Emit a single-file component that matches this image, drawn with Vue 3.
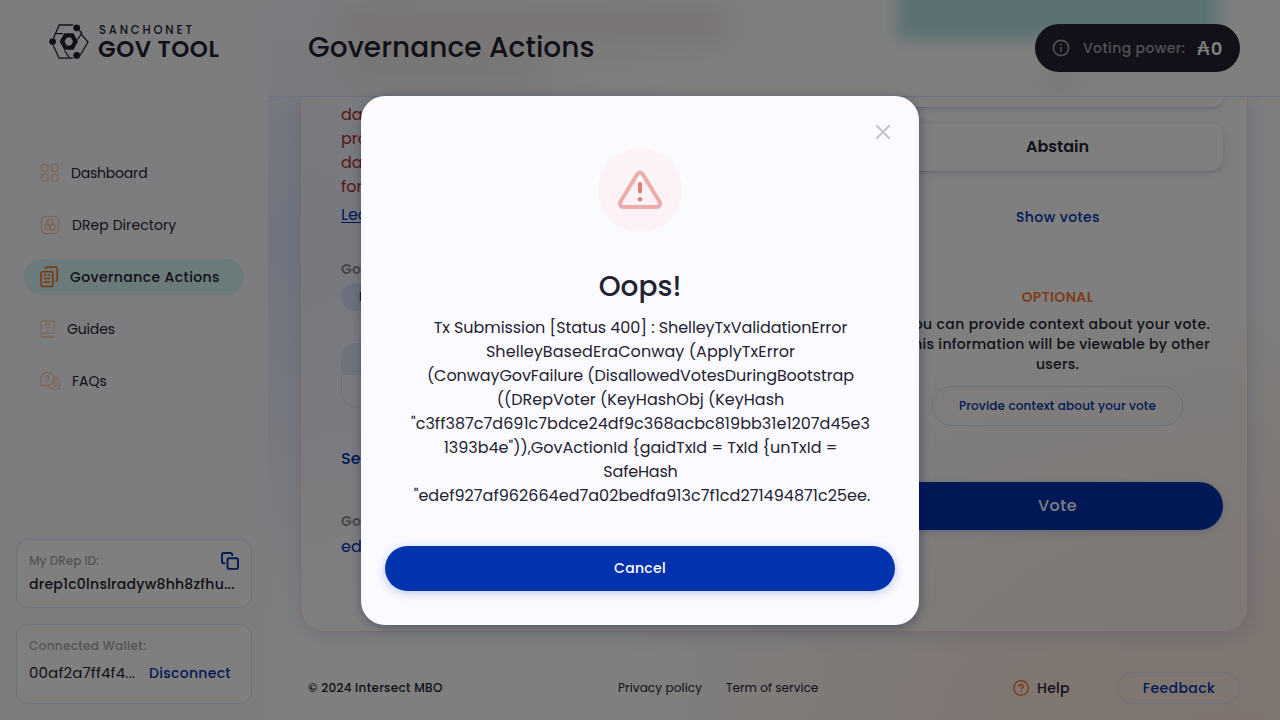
<script setup>
const errorLines = [
  { text: 'Tx Submission [Status 400] : ShelleyTxValidationError', tracking: -0.075 },
  { text: 'ShelleyBasedEraConway (ApplyTxError', tracking: 0.08 },
  { text: '(ConwayGovFailure (DisallowedVotesDuringBootstrap', tracking: -0.08 },
  { text: '((DRepVoter (KeyHashObj (KeyHash', tracking: 0 },
  { text: '"c3ff387c7d691c7bdce24df9c368acbc819bb31e1207d45e3', tracking: 0.03 },
  { text: '1393b4e")),GovActionId {gaidTxId = TxId {unTxId =', tracking: 0 },
  { text: 'SafeHash', tracking: -0.2 },
  { text: '"edef927af962664ed7a02bedfa913c7f1cd271494871c25ee.', tracking: 0.03 },
]
</script>

<template>
  <div class="app">
    <aside class="sidebar">
      <div class="logo">
        <svg width="40" height="36" viewBox="0 0 40 36" fill="none" stroke="#242232" stroke-width="1.3">
          <path d="M4.6 14 10.2 1H24M30.3 6.5 33.4 9.5M31.6 9.3 39 18 31 31.5M4.2 21.5 10.2 34.2H24M6.5 9.6H14M33.2 8.5 28.6 15.5M15.5 26.5 20.6 34" />
          <path d="M10.6 17.5 15.2 9.2h9.2l4.6 8.3-4.6 8.3h-9.2zM15.6 17.5l2.1 3.9h4.2l2.1-3.9-2.1-3.9h-4.2z" fill="#242232" fill-rule="evenodd" stroke="none" />
          <g fill="#242232" stroke="none"><circle cx="27.7" cy="3.8" r="3.4" /><circle cx="3.6" cy="17.6" r="3.4" /><circle cx="27.7" cy="31.4" r="3.4" /></g>
        </svg>
        <div class="logo-words"><span class="sancho">SANCHONET</span><span class="gov">GOV TOOL</span></div>
      </div>
      <nav>
        <a class="item i1">
          <svg width="20" height="20" viewBox="0 0 20 20"><g fill="none" stroke="#ffcbad" stroke-width="1.3"><rect x="1.3" y="1.3" width="6.8" height="7" rx="2.8"/><rect x="11.4" y="1.3" width="7" height="7" rx="2.2"/><rect x="1.3" y="11.3" width="6.8" height="7" rx="2.2"/><rect x="11.4" y="11.3" width="7" height="7" rx="3.3"/></g></svg>
          <span>Dashboard</span>
        </a>
        <a class="item i2">
          <svg width="20" height="20" viewBox="0 0 20 20"><g fill="none" stroke="#ffcbad" stroke-width="1.4"><rect x="1.4" y="1.4" width="17.2" height="17.2" rx="4.5"/><circle cx="10" cy="7.3" r="3"/><circle cx="7.6" cy="12" r="3"/><circle cx="12.4" cy="12" r="3"/></g></svg>
          <span>DRep Directory</span>
        </a>
        <a class="item i3 active">
          <svg width="19" height="22" viewBox="0 0 19 22"><g fill="none" stroke="#ff640a" stroke-width="1.5"><rect x="1" y="5.8" width="11.8" height="14.8" rx="1.8"/><path d="M5.8 3V2.6Q5.8 1.1 7.3 1.1h8.3q1.7 0 1.7 1.7v10.5q0 1.8-1.9 1.8M3.8 9h2.3m1.4 0H10M3.8 12.6H10M3.8 16H10"/></g></svg>
          <span>Governance Actions</span>
        </a>
        <a class="item i4">
          <svg width="16" height="20" viewBox="0 0 16 20"><g fill="none" stroke="#ffcbad" stroke-width="1.3"><path d="M14.2 14.4V3Q14.2 2 13.2 2H2.8Q1 2 1 3.8v12.4Q1 18 2.8 18h11.4M1 15.8q.4-1.4 1.8-1.4h11.4"/><path d="M5.6 6.8q0-1.8 2-1.8t2 1.8q0 1-1 1.7T7.6 10M7.6 11.4v1.2"/></g></svg>
          <span>Guides</span>
        </a>
        <a class="item i5">
          <svg width="21" height="20" viewBox="0 0 21 20"><g fill="none" stroke="#ffcbad" stroke-width="1.3"><path d="M.9 14.5V8.2a6.5 6.5 0 1 1 6.5 6.3zM14 5.8a6.2 6.2 0 0 1 5.4 6v6h-5.8q-4.2 0-5.6-3.3M14.5 9h2M14.5 11.8h2.5M13 14.5h4"/><path d="M5.4 6.5q0-1.7 1.8-1.7T9 6.5q0 1-.9 1.4t-.9 1.3M7.2 10.3v1.2"/></g></svg>
          <span>FAQs</span>
        </a>
      </nav>
      <div class="side-card drep">
        <div class="row"><span class="label l1">My DRep ID:</span>
          <svg width="18" height="18" viewBox="0 0 18 18"><g fill="none" stroke="#0033ad" stroke-width="1.9"><rect x="6.5" y="6.3" width="10.5" height="10.6" rx="1.6"/><path d="M4 11.2H2.7Q1 11.2 1 9.5V2.7Q1 1 2.7 1h6.8q1.7 0 1.7 1.7V4"/></g></svg>
        </div>
        <span class="drep-id">drep1c0lnslradyw8hh8zfhu...</span>
      </div>
      <div class="side-card wallet">
        <span class="label l2">Connected Wallet:</span>
        <div class="row"><span class="addr">00af2a7ff4f4...</span><a class="disconnect">Disconnect</a></div>
      </div>
    </aside>

    <main class="main">
      <header class="header">
        <div class="behind"><i class="b1"></i><i class="b2"></i><i class="b3"></i><i class="b4"></i></div>
        <h1>Governance Actions</h1>
        <div class="power">
          <svg width="18" height="18" viewBox="0 0 18 18"><g fill="none" stroke="#a3a2aa" stroke-width="1.6"><circle cx="9" cy="9" r="7.6"/><path d="M9 8v5M9 4.9v1.7"/></g></svg>
          <span class="power-label">Voting power:</span>
          <span class="power-value"><b>₳</b>0</span>
        </div>
      </header>

      <section class="content">
        <div class="card">
          <div class="details">
            <p class="warning">data<br>provided<br>data<br>format</p>
            <a class="learn">Learn more</a>
            <span class="field f1">Governance</span>
            <span class="pill">Info Action</span>
            <div class="table"><div></div></div>
            <a class="see">See external</a>
            <span class="field f2">Governance</span>
            <span class="hash">edef927a</span>
          </div>
          <div class="voting">
            <div class="choice cut"></div>
            <div class="choice abstain">Abstain</div>
            <a class="show">Show votes</a>
            <span class="optional">OPTIONAL</span>
            <p class="context"><span class="c1">You can provide context about your vote.</span><br><span class="c2">This information will be viewable by other</span><br><span class="c3">users.</span></p>
            <button class="provide">Provide context about your vote</button>
            <button class="vote">Vote</button>
          </div>
        </div>
      </section>

      <footer class="footer">
        <span class="copy">© 2024 Intersect MBO</span>
        <div class="links"><span class="privacy">Privacy policy</span><span class="terms">Term of service</span></div>
        <div class="actions">
          <svg width="16" height="16" viewBox="0 0 16 16"><g fill="none" stroke="#ff640a" stroke-width="1.3"><circle cx="8" cy="8" r="7.3"/><path d="M5.8 6.5q0-2 2.2-2t2.2 1.9q0 1.1-1.1 1.6T8 9.4M8 10.7v1.4"/></g></svg>
          <span class="help">Help</span>
          <button class="feedback">Feedback</button>
        </div>
      </footer>
    </main>

    <div class="overlay">
      <div class="modal">
        <svg class="close" width="14" height="14" viewBox="0 0 14 14"><path d="M1 1l12 12M13 1L1 13" stroke="#c4c4c7" stroke-width="2" stroke-linecap="round"/></svg>
        <svg class="alert" width="84" height="84" viewBox="0 0 84 84">
          <circle cx="42" cy="42" r="42" fill="#fdf2f5"/>
          <path d="M39.1 26.5 22.7 53.2Q20.8 58.9 25.2 59H58.8Q63.2 58.9 61.3 53.2L44.9 26.5Q42 22.7 39.1 26.5z" fill="none" stroke="#eeabab" stroke-width="4" stroke-linejoin="round"/>
          <path d="M42 36v7.5" stroke="#e57b7b" stroke-width="4" stroke-linecap="round"/><circle cx="42" cy="51.2" r="2.2" fill="#e57b7b"/>
        </svg>
        <h2>Oops!</h2>
        <div class="message">
          <div v-for="line in errorLines" :key="line.text"><span :style="{ letterSpacing: line.tracking + 'px' }">{{ line.text }}</span></div>
        </div>
        <button class="cancel">Cancel</button>
      </div>
    </div>
  </div>
</template>

<style>
body { margin: 0; overflow: hidden; }
</style>

<style scoped>
* { box-sizing: border-box; }
.app { position: relative; width: 1280px; height: 720px; display: flex; overflow: hidden; background: #fff; font-family: Poppins, Inter, "Open Sans", sans-serif; color: #242232; white-space: nowrap; }
button { font-family: inherit; padding: 0; border: 0; background: none; }
svg { display: block; flex: none; overflow: visible; }
p, h1, h2 { margin: 0; }

.sidebar { width: 268px; height: 720px; flex: none; display: flex; flex-direction: column; background: #fbfbff; }
.logo { display: flex; gap: 9px; padding: 24px 0 0 49px; height: 155px; }
.logo-words { display: flex; flex-direction: column; }
.sancho { font-size: 11.5px; line-height: 13px; font-weight: 500; letter-spacing: 2.85px; padding-left: 1px; }
.gov { font-size: 23px; line-height: 25px; font-weight: 600; letter-spacing: .5px; }
nav { display: flex; flex-direction: column; gap: 16px; padding-left: 24px; }
.item { width: 220px; height: 36px; border-radius: 18px; display: flex; align-items: center; padding-left: 16px; font-size: 14px; }
.item svg { margin-right: 11px; }
.i1 { letter-spacing: -.2px; }
.i2 { letter-spacing: .07px; }
.i2 svg { margin-right: 12px; }
.i3 { letter-spacing: .4px; }
.i4 { letter-spacing: -.15px; }
.active { background: #d6f5f4; font-weight: 500; }
.side-card { width: 236px; margin-left: 16px; border: 1px solid #d6e2ff; border-radius: 12px; background: #fff; padding: 0 12px; }
.row { display: flex; align-items: center; }
.drep { height: 69px; margin-top: auto; margin-bottom: 16px; padding-top: 11px; }
.drep .row { height: 20px; justify-content: space-between; }
.drep-id { display: block; font-size: 14px; font-weight: 500; line-height: 26px; letter-spacing: .26px; }
.wallet { height: 80px; margin-bottom: 16px; padding-top: 11px; }
.label { display: block; font-size: 12px; font-weight: 500; line-height: 20px; color: #a9a9a9; }
.l2 { letter-spacing: .35px; }
.wallet .row { margin-top: 3px; height: 26px; }
.addr { font-size: 15px; width: 120px; letter-spacing: .14px; }
.disconnect { font-size: 14px; font-weight: 500; color: #0033ad; padding-top: 2px; letter-spacing: .3px; }

.main { flex: 1; display: flex; flex-direction: column; background:
  radial-gradient(ellipse 480px 400px at 10px 240px, #e4eaff 0%, rgba(228,234,255,.6) 45%, rgba(228,234,255,0) 100%),
  radial-gradient(ellipse 620px 480px at 960px 760px, #ffe8e0 0%, rgba(255,236,226,.85) 45%, rgba(255,240,230,0) 100%), #fff; }
.header { position: relative; height: 97px; flex: none; border-bottom: 1px solid #d6e2ff; display: flex; align-items: center; justify-content: space-between; padding: 0 40px; background: rgba(255,255,255,.35); overflow: hidden; }
.behind { position: absolute; inset: 0; }
.behind i { position: absolute; filter: blur(14px); }
.b1 { left: 72px; top: 4px; width: 390px; height: 42px; background: #f3eaea; }
.b2 { left: 72px; top: 36px; width: 200px; height: 50px; background: #f3ecec; }
.b3 { left: 629px; top: -40px; width: 322px; height: 80px; background: #b9e3e8; }
.b3 { filter: blur(8px) !important; }
.b4 { left: 775px; top: 74px; width: 34px; height: 18px; background: #e6e6e6; }
h1 { position: relative; font-size: 28px; font-weight: 500; line-height: 40px; padding-bottom: 1px; letter-spacing: .06px; }
.power { position: relative; width: 205px; height: 48px; border-radius: 24px; background: #242232; display: flex; align-items: center; padding-left: 17px; }
.power-label { margin-left: 13px; width: 114px; font-size: 14px; font-weight: 500; color: #a3a2aa; letter-spacing: .4px; }
.power-value { display: flex; align-items: center; gap: 1px; font-size: 18px; font-weight: 600; color: #fff; }
.power-value b { font-weight: 500; }

.content { height: 535px; flex: none; overflow: visible; padding: 0 32px 0 32px; clip-path: inset(0 0 -60px 0); }
.card { height: 535px; display: flex; justify-content: space-between; border: 1px solid #ffd8d2; border-top: 0; border-radius: 0 0 24px 24px; background: rgba(255,255,255,.35); box-shadow: 2px 2px 20px rgba(47,98,220,.2); padding: 0 24px 0 40px; }
.details { display: flex; flex-direction: column; align-items: flex-start; width: 440px; font-size: 16px; }
.warning { margin-top: 6px; line-height: 24px; color: #b82a2a; }
.learn { line-height: 18px; height: 21px; margin-top: 7px; color: #0033ad; text-decoration: underline; text-underline-offset: 2px; text-decoration-thickness: 1px; }
.field { font-size: 14px; font-weight: 600; line-height: 20px; color: #8e8e90; letter-spacing: .3px; }
.f1 { margin-top: 32px; }
.pill { margin-top: 4px; height: 28px; line-height: 28px; border-radius: 14px; background: #d6e2ff; padding: 0 18px; font-size: 12px; font-weight: 500; }
.table { margin-top: 32px; width: 400px; height: 64px; border: 1px solid #d6e2ff; border-radius: 14px; overflow: hidden; }
.table div { height: 31px; background: #dfe6f6; }
.see { margin-top: 41px; line-height: 22px; font-weight: 500; color: #0033ad; }
.f2 { margin-top: 41px; }
.hash { line-height: 24px; margin-top: 4px; color: #0033ad; }

.voting { width: 331px; display: flex; flex-direction: column; align-items: center; }
.choice { width: 100%; flex: none; border-radius: 12px; background: rgba(255,255,255,.4); box-shadow: 0 1px 2px rgba(0,51,173,.16), 1px 2px 8px rgba(0,51,173,.12); text-align: center; }
.cut { height: 10px; border-radius: 0 0 12px 12px; }
.abstain { height: 48px; margin-top: 16px; line-height: 48px; font-size: 16px; font-weight: 600; }
.show { margin-top: 35px; padding-left: 1px; line-height: 22px; font-size: 14px; font-weight: 500; color: #0033ad; letter-spacing: .4px; }
.optional { margin-top: 59px; line-height: 20px; font-size: 14px; font-weight: 600; color: #ff7c36; letter-spacing: .35px; }
.context { margin-top: 7px; line-height: 20px; font-size: 14px; font-weight: 500; text-align: center; }
.c1 { letter-spacing: .4px; }
.c2 { letter-spacing: .32px; }
.c3 { letter-spacing: .3px; }
.provide { margin-top: 12px; width: 251px; height: 40px; flex: none; border: 1px solid #d6e2ff; border-radius: 20px; font-size: 12px; font-weight: 500; color: #0033ad; letter-spacing: .16px; }
.vote { margin-top: 56px; width: 331px; height: 48px; flex: none; border-radius: 24px; background: #0033ad; color: #fff; font-size: 16px; font-weight: 500; letter-spacing: .5px; padding-bottom: 1px; box-shadow: 0 2px 8px rgba(0,51,173,.2); }

.footer { flex: 1; display: flex; align-items: center; padding: 24px 40px 0; font-size: 12px; }
.copy { width: 310px; font-weight: 500; letter-spacing: .3px; }
.links { display: flex; }
.privacy { width: 108px; letter-spacing: .13px; }
.terms { letter-spacing: .06px; }
.actions { margin-left: auto; display: flex; align-items: center; font-size: 14px; font-weight: 500; }
.help { width: 81px; margin-left: 8px; letter-spacing: .3px; }
.feedback { width: 122px; height: 32px; border: 1px solid #d6e2ff; border-radius: 16px; color: #0033ad; font-size: 14px; font-weight: 500; letter-spacing: .4px; }

.overlay { position: absolute; inset: 0; display: flex; align-items: center; justify-content: center; background: rgba(0,0,0,.5); }
.modal { position: relative; width: 558px; height: 529px; border-radius: 24px; background: #fbfbff; display: flex; flex-direction: column; align-items: center; padding: 52px 24px 0; box-shadow: 1px 2px 11px rgba(0,18,61,.37); }
.close { position: absolute; top: 29px; right: 29px; }
h2 { margin-top: 37px; font-size: 28px; line-height: 36px; font-weight: 500; }
.message { margin-top: 11px; font-size: 16px; line-height: 24px; text-align: center; padding-left: 1px; }
.message div:last-child { padding-left: 3px; }
.cancel { margin-top: 38px; width: 510px; height: 45px; flex: none; border-radius: 23px; background: #0033ad; color: #fff; font-size: 14px; font-weight: 500; letter-spacing: .3px; box-shadow: 0 2px 11px rgba(0,51,173,.25); }
</style>
